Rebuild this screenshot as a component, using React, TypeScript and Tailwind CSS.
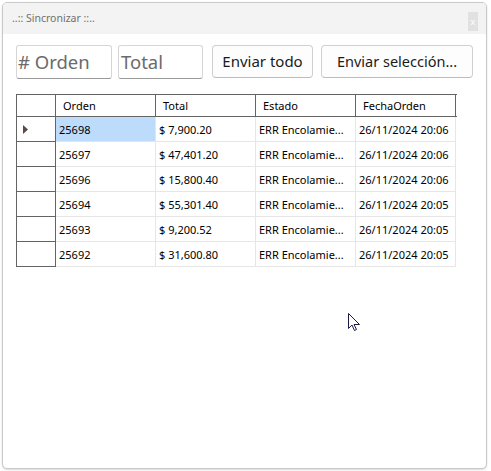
import React from "react";

const rows = [
  { orden: "25698", total: "$ 7,900.20", fecha: "26/11/2024 20:06" },
  { orden: "25697", total: "$ 47,401.20", fecha: "26/11/2024 20:06" },
  { orden: "25696", total: "$ 15,800.40", fecha: "26/11/2024 20:06" },
  { orden: "25694", total: "$ 55,301.40", fecha: "26/11/2024 20:05" },
  { orden: "25693", total: "$ 9,200.52", fecha: "26/11/2024 20:05" },
  { orden: "25692", total: "$ 31,600.80", fecha: "26/11/2024 20:05" },
];

export default function App() {
  return (
    <div
      className="relative w-[491px] h-[471px] bg-white pl-[2px] pt-[2px]"
      style={{ fontFamily: '"Noto Sans", "Open Sans", sans-serif' }}
    >
      <div className="w-[485px] h-[467px] border border-[#c9c9c9] rounded-[5px] overflow-hidden bg-white flex flex-col shadow-[0_1px_2px_rgba(0,0,0,0.15)]">
        <div className="h-[31px] bg-[#f3f3f3] flex items-center justify-between pl-[9px] pr-[8px] shrink-0">
          <span className="text-[10.5px] text-[#707070] leading-none">..:: Sincronizar ::..</span>
          <div className="w-[10px] h-[19px] mt-[6px] bg-[#e1e1e1] text-white text-[9px] leading-none flex items-center justify-center">
            x
          </div>
        </div>
        <div className="flex-1 pl-[13px] pt-[11px]">
          <div className="flex items-start">
            <div className="w-[96px] h-[34px] border border-[#d6d6d6] border-b-[#9a9a9a] rounded-[3px] flex items-center pl-[1px] text-[18.5px] text-[#6b6b6b] leading-none">
              # Orden
            </div>
            <div className="ml-[6px] w-[85px] h-[34px] border border-[#d6d6d6] border-b-[#9a9a9a] rounded-[3px] flex items-center pl-[2px] text-[18.5px] text-[#6b6b6b] leading-none">
              Total
            </div>
            <div className="ml-[9px] w-[101px] h-[33px] border border-[#d0d0d0] border-b-[#bdbdbd] rounded-[4px] bg-[#fdfdfd] flex items-center justify-center text-[15px] text-[#1b1b1b] leading-none">
              Enviar todo
            </div>
            <div className="ml-[8px] w-[152px] h-[33px] border border-[#d0d0d0] border-b-[#bdbdbd] rounded-[4px] bg-[#fdfdfd] flex items-center justify-center text-[14.5px] text-[#1b1b1b] leading-none">
              Enviar selección...
            </div>
          </div>

          <div className="mt-[15px] w-[441px] text-[11px] text-black leading-none">
            <div className="flex h-[23px] border-t border-b border-l border-[#646464]">
              <div className="w-[39px] border-r border-[#646464]" />
              {["Orden", "Total", "Estado", "FechaOrden"].map((h) => (
                <div key={h} className="w-[100px] border-r border-[#646464] flex items-center pl-[7px]">
                  {h}
                </div>
              ))}
            </div>
            {rows.map((r, i) => (
              <div key={r.orden} className="flex h-[25px]">
                <div className="w-[40px] border-l border-r border-b border-[#646464] flex items-center pl-[6px]">
                  {i === 0 && (
                    <svg width="5" height="9" viewBox="0 0 5 9">
                      <path d="M0 0 L5 4.5 L0 9 Z" fill="#5b4b45" />
                    </svg>
                  )}
                </div>
                <div
                  className={
                    "w-[100px] border-r border-b border-[#e6e6e6] flex items-center pl-[3px] " +
                    (i === 0 ? "bg-[#bddbfa]" : "")
                  }
                >
                  {r.orden}
                </div>
                <div className="w-[100px] border-r border-b border-[#e6e6e6] flex items-center pl-[3px]">
                  {r.total}
                </div>
                <div className="w-[100px] border-r border-b border-[#e6e6e6] flex items-center pl-[3px]">
                  ERR Encolamie...
                </div>
                <div className="w-[100px] border-r border-b border-[#e6e6e6] flex items-center pl-[3px]">
                  {r.fecha}
                </div>
              </div>
            ))}
          </div>
        </div>
      </div>

      <svg
        className="absolute left-[348px] top-[313px]"
        width="13"
        height="19"
        viewBox="0 0 13 19"
      >
        <path
          d="M0.5 0.5 L0.5 15.5 L4 12 L6.5 17.5 L8.5 16.5 L6 11.5 L11.5 11.5 Z"
          fill="white"
          stroke="#1a1a4a"
          strokeWidth="1"
          strokeLinejoin="miter"
        />
      </svg>
    </div>
  );
}
